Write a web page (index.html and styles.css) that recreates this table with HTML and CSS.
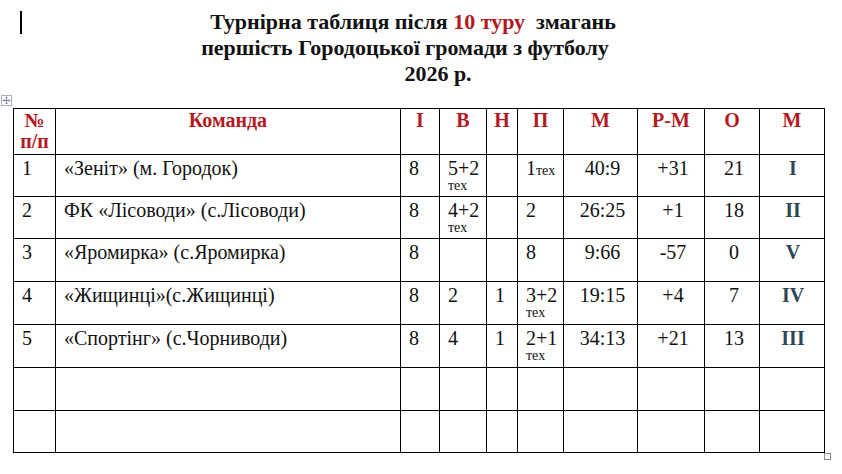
FILE: index.html
```html
<!DOCTYPE html>
<html lang="uk">
<head>
<meta charset="utf-8">
<title>Турнірна таблиця</title>
<link rel="stylesheet" href="styles.css">
</head>
<body>
<div class="page">
  <span class="caret"></span>
  <div class="title">
    <div class="t1">Турнірна таблиця після <span class="red">10 туру</span>&nbsp; змагань</div>
    <div class="t2">першість Городоцької громади з футболу</div>
    <div class="t3">2026 р.</div>
  </div>
  <span class="move-handle">
    <svg width="9" height="9" viewBox="0 0 9 9"><path d="M4.5 1v7M1 4.5h7M3.5 2l1-1 1 1M3.5 7l1 1 1-1M2 3.5l-1 1 1 1M7 3.5l1 1-1 1" fill="none" stroke="#5a6e8a" stroke-width="0.8"/></svg>
  </span>
  <table class="grid">
    <colgroup>
      <col class="c1"><col class="c2"><col class="c3"><col class="c4"><col class="c5">
      <col class="c6"><col class="c7"><col class="c8"><col class="c9"><col class="c10">
    </colgroup>
    <thead>
      <tr class="head">
        <th>№<br>п/п</th><th>Команда</th><th>І</th><th>В</th><th>Н</th><th>П</th><th>М</th><th>Р-М</th><th>О</th><th>М</th>
      </tr>
    </thead>
    <tbody>
      <tr class="r42">
        <td>1</td><td>«Зеніт» (м. Городок)</td><td>8</td><td>5+2<span class="sub">тех</span></td><td></td><td>1<span class="subi">тех</span></td><td class="ctr">40:9</td><td class="ctr">+31</td><td class="ctr">21</td><td class="rom">I</td>
      </tr>
      <tr class="r42">
        <td>2</td><td>ФК «Лісоводи» (с.Лісоводи)</td><td>8</td><td>4+2<span class="sub">тех</span></td><td></td><td>2</td><td class="ctr">26:25</td><td class="ctr">+1</td><td class="ctr">18</td><td class="rom">II</td>
      </tr>
      <tr class="r43">
        <td>3</td><td>«Яромирка» (с.Яромирка)</td><td>8</td><td></td><td></td><td>8</td><td class="ctr">9:66</td><td class="ctr">-57</td><td class="ctr">0</td><td class="rom">V</td>
      </tr>
      <tr class="r43">
        <td>4</td><td>«Жищинці»(с.Жищинці)</td><td>8</td><td>2</td><td>1</td><td>3+2<span class="sub">тех</span></td><td class="ctr">19:15</td><td class="ctr">+4</td><td class="ctr">7</td><td class="rom">IV</td>
      </tr>
      <tr class="r43">
        <td>5</td><td>«Спортінг» (с.Чорниводи)</td><td>8</td><td>4</td><td>1</td><td>2+1<span class="sub">тех</span></td><td class="ctr">34:13</td><td class="ctr">+21</td><td class="ctr">13</td><td class="rom">III</td>
      </tr>
      <tr class="r43">
        <td></td><td></td><td></td><td></td><td></td><td></td><td></td><td></td><td></td><td></td>
      </tr>
      <tr class="r42">
        <td></td><td></td><td></td><td></td><td></td><td></td><td></td><td></td><td></td><td></td>
      </tr>
    </tbody>
  </table>
  <span class="size-handle"></span>
</div>
</body>
</html>
```

FILE: styles.css
```css
html, body {
  margin: 0;
  padding: 0;
  background: #ffffff;
}

body {
  font-family: "Liberation Serif", "DejaVu Serif", "Times New Roman", serif;
  color: #111111;
}

.page {
  position: relative;
  width: 842px;
  height: 474px;
  padding-top: 9px;
  box-sizing: border-box;
}

.caret {
  position: absolute;
  left: 20px;
  top: 11px;
  width: 2px;
  height: 23px;
  background: #000000;
}

.title {
  width: 810px;
  text-align: center;
  font-weight: bold;
  font-size: 22px;
  line-height: 26px;
  color: #111111;
}

.t1 { padding-left: 16px; }
.t2 { padding-left: 0; }
.t3 { padding-left: 66px; }

.red { color: #b3191f; }

.move-handle {
  position: absolute;
  left: 1px;
  top: 95px;
  width: 9px;
  height: 9px;
  border: 1px solid #a9b3c3;
  background: #ffffff;
  display: flex;
  align-items: center;
  justify-content: center;
}

.move-handle svg { display: block; }

.size-handle {
  position: absolute;
  left: 824px;
  top: 453px;
  width: 5px;
  height: 5px;
  border: 1px solid #8c8c8c;
  background: #ffffff;
}

.grid {
  margin: 21px 0 0 13px;
  width: 811px;
  border-collapse: collapse;
  table-layout: fixed;
}

.c1 { width: 42px; }
.c2 { width: 345px; }
.c3 { width: 39px; }
.c4 { width: 47px; }
.c5 { width: 31px; }
.c6 { width: 46px; }
.c7 { width: 74px; }
.c8 { width: 67px; }
.c9 { width: 55px; }
.c10 { width: 65px; }

.grid th,
.grid td {
  border: 1px solid #000000;
  vertical-align: top;
  padding: 2px 0 0 8px;
  text-align: left;
  overflow: hidden;
  white-space: nowrap;
}

.grid th {
  height: 46px;
  box-sizing: border-box;
  padding: 1px 2px 0 2px;
  text-align: center;
  color: #b3191f;
  font-weight: bold;
  font-size: 20px;
  line-height: 21px;
}

.grid td {
  font-size: 20px;
  line-height: 23px;
  color: #111111;
}

.r42 td { height: 42px; box-sizing: border-box; }
.r43 td { height: 43px; box-sizing: border-box; }

.grid td.ctr {
  text-align: center;
  padding-left: 4px;
  padding-right: 0;
}

.grid td.rom {
  text-align: center;
  padding-left: 2px;
  font-weight: bold;
  color: #2c4656;
}

.sub {
  display: block;
  font-size: 14px;
  line-height: 12px;
}

.subi {
  font-size: 14px;
}
```
